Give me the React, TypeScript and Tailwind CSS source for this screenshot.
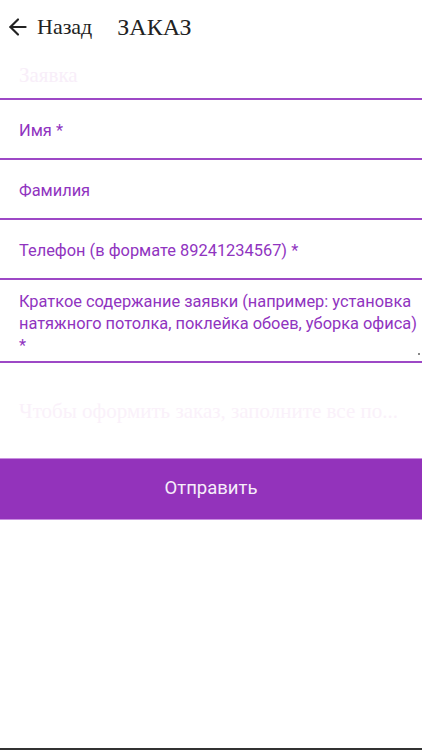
import React from 'react';
import { ArrowLeft } from 'lucide-react';

const fields = [
  'Имя *',
  'Фамилия',
  'Телефон (в формате 89241234567) *',
];

const App: React.FC = () => {
  return (
    <div className="w-[422px] h-[750px] bg-white flex flex-col font-['Roboto',sans-serif]">
      {/* header */}
      <div className="h-[57px] flex items-center pl-[5px] pb-[4px] shrink-0">
        <ArrowLeft className="w-[26px] h-[26px] text-[#222]" strokeWidth={2} />
        <span className="ml-[6px] text-[22px] text-[#222] font-['Liberation_Serif',serif]">Назад</span>
        <span className="ml-[25px] text-[24px] text-[#222] font-['Liberation_Serif',serif]">ЗАКАЗ</span>
      </div>

      {/* form */}
      <div className="h-[43px] border-b-2 border-[#9d48c6] px-[19px] flex items-start">
        <span className="text-[21px] leading-[36px] text-[#f8eef9] font-['Liberation_Serif',serif]">Заявка</span>
      </div>
      {fields.map((f) => (
        <div key={f} className="h-[60px] border-b-2 border-[#9d48c6] px-[19px] pt-[5px] flex items-center">
          <span className="text-[16.4px] text-[#9034bf]">{f}</span>
        </div>
      ))}
      <div className="relative h-[83px] border-b-2 border-[#9d48c6] pl-[19px] pr-0 pt-[11px]">
        <p className="text-[16.4px] leading-[22px] text-[#9034bf]">
          Краткое содержание заявки (например: установка натяжного потолка, поклейка обоев, уборка офиса) *
        </p>
        <span className="absolute right-[2px] bottom-[6px] w-[2px] h-[2px] bg-[#888]" />
      </div>

      <div className="h-[95px] px-[19px] pt-[33px]">
        <span className="text-[21px] text-[#faf1fa] font-['Liberation_Serif',serif]">
          Чтобы оформить заказ, заполните все по...
        </span>
      </div>

      <button className="h-[62px] w-full bg-[#9333bb] border-y border-[#c98ee0] text-[18.5px] text-[#f6eefa] flex items-center justify-center shrink-0">
        Отправить
      </button>

      <div className="flex-1" />
      <div className="h-[2px] bg-[#333] shrink-0" />
    </div>
  );
};

export default App;
